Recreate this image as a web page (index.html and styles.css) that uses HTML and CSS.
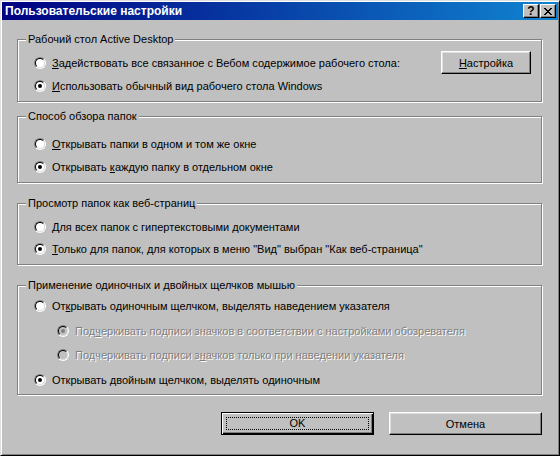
FILE: index.html
```html
<!DOCTYPE html>
<html lang="ru">
<head>
    <meta charset="UTF-8">
    <title>Пользовательские настройки</title>
    <link rel="stylesheet" href="styles.css">
</head>
<body>

<div class="window">
    <div class="titlebar">
        <span class="title">Пользовательские настройки</span>
        <span class="tb-btn help">?</span>
        <span class="tb-btn close">
            <svg width="8" height="7" viewBox="0 0 8 7"><path d="M0 0h2v1H0zM6 0h2v1H6zM1 1h2v1H1zM5 1h2v1H5zM2 2h4v1H2zM3 3h2v1H3zM2 4h4v1H2zM1 5h2v1H1zM5 5h2v1H5zM0 6h2v1H0zM6 6h2v1H6z" fill="#000"/></svg>
        </span>
    </div>

    <div class="content">
        <fieldset class="group g1">
            <legend>Рабочий стол Active Desktop</legend>
            <div class="row">
                <span class="radio"></span>
                <span class="label"><u>З</u>адействовать все связанное с Вебом содержимое рабочего стола:</span>
                <button class="btn btn-setup"><u>Н</u>астройка</button>
            </div>
            <div class="row">
                <span class="radio checked"></span>
                <span class="label"><u>И</u>спользовать обычный вид рабочего стола Windows</span>
            </div>
        </fieldset>

        <fieldset class="group g2">
            <legend>Способ обзора папок</legend>
            <div class="row">
                <span class="radio"></span>
                <span class="label"><u>О</u>ткрывать папки в одном и том же окне</span>
            </div>
            <div class="row">
                <span class="radio checked"></span>
                <span class="label">Открывать <u>к</u>аждую папку в отдельном окне</span>
            </div>
        </fieldset>

        <fieldset class="group g3">
            <legend>Просмотр папок как веб-страниц</legend>
            <div class="row">
                <span class="radio"></span>
                <span class="label"><u>Д</u>ля всех папок с гипертекстовыми документами</span>
            </div>
            <div class="row">
                <span class="radio checked"></span>
                <span class="label"><u>Т</u>олько для папок, для которых в меню "Вид" выбран "Как веб-страница"</span>
            </div>
        </fieldset>

        <fieldset class="group g4">
            <legend>Применение одиночных и двойных щелчков мышью</legend>
            <div class="row">
                <span class="radio"></span>
                <span class="label">От<u>к</u>рывать одиночным щелчком, выделять наведением указателя</span>
            </div>
            <div class="row sub disabled">
                <span class="radio checked"></span>
                <span class="label">Под<u>ч</u>еркивать подписи значков в соответствии с настройками обозревателя</span>
            </div>
            <div class="row sub disabled">
                <span class="radio"></span>
                <span class="label">Подчеркивать подписи з<u>н</u>ачков только при наведении указателя</span>
            </div>
            <div class="row">
                <span class="radio checked"></span>
                <span class="label">Открывать <u>д</u>войным щелчком, выделять одиночным</span>
            </div>
        </fieldset>

        <div class="actions">
            <button class="btn btn-default"><span class="focus">OK</span></button>
            <button class="btn">Отмена</button>
        </div>
    </div>
</div>

</body>
</html>
```

FILE: styles.css
```css
body {
    margin: 0;
    background-color: #c0c0c0;
    font-family: "Liberation Sans", Arial, sans-serif;
    font-size: 11px;
    color: #000;
}
.window {
    width: 560px;
    height: 456px;
    box-sizing: border-box;
    padding: 1px;
    background-color: #c0c0c0;
    border: 1px solid;
    border-color: #dfdfdf #000 #000 #dfdfdf;
    box-shadow: inset 1px 1px 0 #fff, inset -1px -1px 0 #808080;
}
.titlebar {
    height: 18px;
    display: flex;
    align-items: center;
    padding: 0 2px 0 3px;
    background: linear-gradient(to right, #000080, #1084d0);
}
.title {
    flex: 1;
    color: #fff;
    font-weight: bold;
    font-size: 12px;
}
.tb-btn {
    width: 16px;
    height: 14px;
    box-sizing: border-box;
    display: flex;
    align-items: center;
    justify-content: center;
    background-color: #c0c0c0;
    border: 1px solid;
    border-color: #fff #000 #000 #fff;
    box-shadow: inset -1px -1px 0 #808080;
    font-weight: bold;
    font-size: 12px;
    line-height: 12px;
}
.tb-btn.help {
    margin-right: 1px;
}
.content {
    padding: 12px 16px 0 15px;
}
.group {
    margin: 0;
    padding: 5px 10px 4px 16px;
    border: 1px solid #808080;
    box-shadow: inset 1px 1px 0 #fff, 1px 1px 0 #fff;
    min-width: 0;
}
.group legend {
    margin-left: -8px;
    padding: 0 2px;
    background-color: #c0c0c0;
    line-height: 14px;
}
.g2 {
    margin-top: 7px;
    padding-top: 9px;
}
.g3 {
    margin-top: 13px;
    padding-top: 6px;
}
.g4 {
    margin-top: 13px;
    padding-top: 2px;
    padding-bottom: 2px;
}
.row {
    display: flex;
    align-items: center;
    height: 23px;
}
.g3 .row {
    height: 22px;
}
.g4 .row {
    height: 24.5px;
}
.row.sub {
    padding-left: 23px;
}
.label {
    margin-left: 6px;
    white-space: nowrap;
}
.disabled .label {
    color: #808080;
    text-shadow: 1px 1px 0 #fff;
}
.radio {
    width: 12px;
    height: 12px;
    flex: none;
    box-sizing: border-box;
    border-radius: 50%;
    border: 1px solid;
    border-color: #808080 #fff #fff #808080;
    display: flex;
    align-items: center;
    justify-content: center;
    position: relative;
}
.radio::before {
    content: "";
    position: absolute;
    inset: 0;
    border-radius: 50%;
    border: 1px solid;
    border-color: #000 #dfdfdf #dfdfdf #000;
    background-color: #fff;
}
.disabled .radio::before {
    background-color: #c0c0c0;
}
.radio.checked::after {
    content: "";
    position: relative;
    width: 4px;
    height: 4px;
    border-radius: 50%;
    background-color: #000;
}
.disabled .radio.checked::after {
    background-color: #808080;
}
.btn {
    font-family: inherit;
    font-size: 11px;
    color: #000;
    background-color: #c0c0c0;
    border: 1px solid;
    border-color: #fff #000 #000 #fff;
    box-shadow: inset -1px -1px 0 #808080, inset 1px 1px 0 #dfdfdf;
    width: 153px;
    height: 23px;
    padding: 0;
    border-radius: 0;
}
.btn-setup {
    margin-left: auto;
    width: 90px;
}
.actions {
    display: flex;
    justify-content: flex-end;
    gap: 15px;
    margin-top: 17px;
}
.btn-default {
    border: 1px solid #000;
    box-shadow: inset 1px 1px 0 #fff, inset -1px -1px 0 #000, inset -2px -2px 0 #808080;
    padding: 4px;
}
.btn-default .focus {
    display: block;
    height: 100%;
    box-sizing: border-box;
    border: 1px dotted #000;
    line-height: 11px;
}
```
